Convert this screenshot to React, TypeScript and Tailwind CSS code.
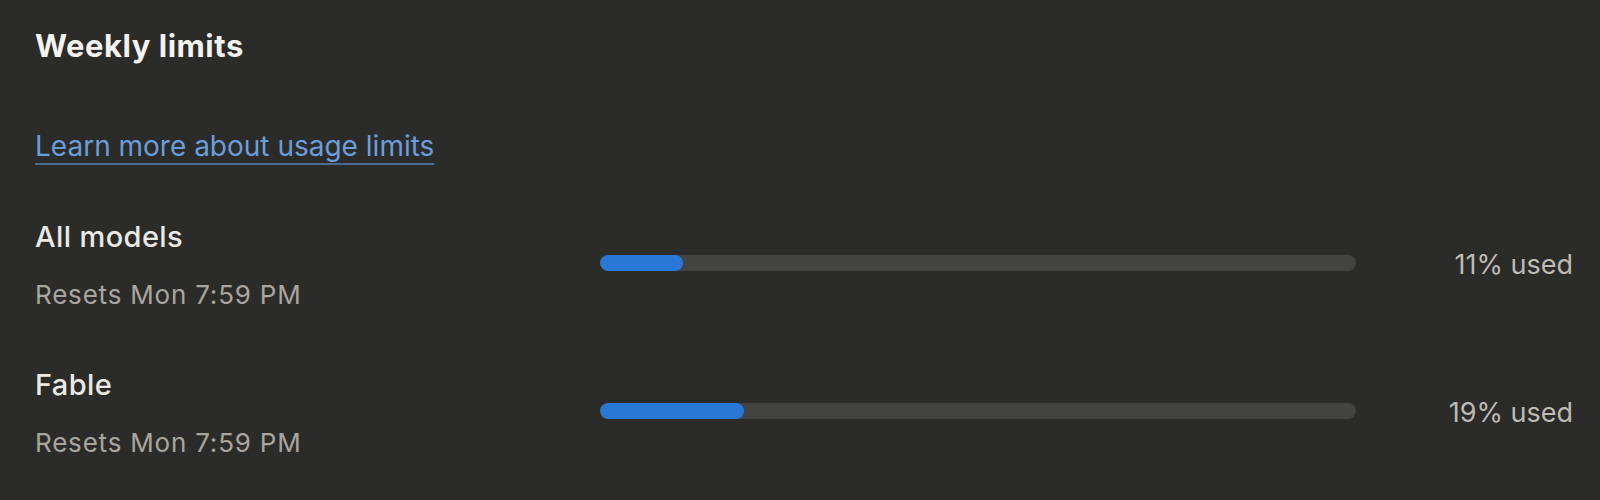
import { useMemo } from 'react'

type Limite = {
  id: string
  nombre: string
  reinicio: string
  usado: number
}

const limites: Limite[] = [
  { id: 'all', nombre: 'All models', reinicio: 'Resets Mon 7:59 PM', usado: 11 },
  { id: 'fable', nombre: 'Fable', reinicio: 'Resets Mon 7:59 PM', usado: 19 },
]

function BarraUso({ pct }: { pct: number }) {
  return (
    <div className="mb-1 h-4 w-full rounded-full bg-[#434341] overflow-hidden">
      <div className="h-full rounded-full bg-[#2a78d6]" style={{ width: `${pct}%` }} />
    </div>
  )
}

export default function App() {
  const filas = useMemo(() => limites, [])

  return (
    <div className="min-h-[500px] w-full bg-[#2b2b29] pl-[35px] pr-[27px] pt-[28px] font-['Inter',sans-serif]">
      <h2 className="text-[31px] leading-[36px] font-bold tracking-[0.5px] text-[#f3f2ed]">Weekly limits</h2>

      <div className="mt-[64px]">
        <a
          href="#"
          className="text-[28px] leading-[36px] text-[#6a9edb] underline decoration-[#4a6b92] decoration-2 underline-offset-[7px]"
        >
          Learn more about usage limits
        </a>
      </div>

      {/* Filas de límites */}
      <div className="mt-[55px] flex flex-col gap-[56px]">
        {filas.map((f) => (
          <div key={f.id} className="grid grid-cols-[565px_756px_1fr] items-center">
            <div>
              <p className="text-[29px] leading-[36px] font-medium tracking-[0.4px] text-[#ebe9e3]">{f.nombre}</p>
              <p className="mt-6 text-[26px] leading-[32px] tracking-[0.8px] text-[#a8a69e]">{f.reinicio}</p>
            </div>
            <BarraUso pct={f.usado} />
            <p className="text-right text-[27px] leading-[36px] text-[#bdbbb3]">{f.usado}% used</p>
          </div>
        ))}
      </div>
    </div>
  )
}
